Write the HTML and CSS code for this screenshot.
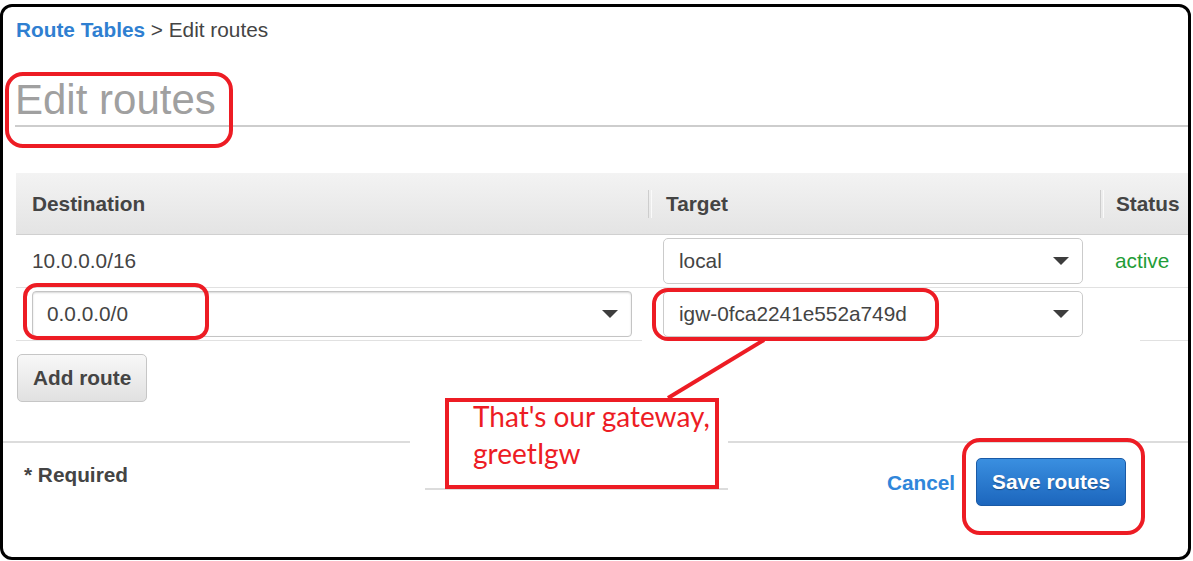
FILE: index.html
```html
<!DOCTYPE html>
<html>
<head>
<meta charset="utf-8">
<link rel="stylesheet" href="styles.css">
</head>
<body>
<div class="page">
  <div class="frame">
    <div class="main">
      <div class="crumbs"><a class="crumb-link">Route Tables</a> &gt; Edit routes</div>
      <h1 class="title">Edit routes</h1>
      <div class="table">
        <div class="th">Destination</div>
        <div class="th th-sep th-target">Target</div>
        <div class="th th-sep th-status">Status</div>

        <div class="td td-dest">10.0.0.0/16</div>
        <div class="td td-target"><div class="select"><span>local</span><i class="caret"></i></div></div>
        <div class="td td-status"><span class="active">active</span></div>

        <div class="td td-dest"><div class="input"><span>0.0.0.0/0</span><i class="caret"></i></div></div>
        <div class="td td-target"><div class="select"><span>igw-0fca2241e552a749d</span><i class="caret"></i></div></div>
        <div class="td td-status"></div>
      </div>
      <button class="btn-add">Add route</button>
    </div>
    <div class="footer">
      <div class="required">* Required</div>
      <div class="actions">
        <a class="cancel">Cancel</a>
        <button class="btn-save">Save routes</button>
      </div>
    </div>
  </div>

  <div class="cover"></div>
  <svg class="marks" width="1193" height="561" viewBox="0 0 1193 561">
    <rect x="642" y="340" width="498" height="1" fill="#fff"/>
    <line x1="425" y1="489" x2="728" y2="489" stroke="#dcdcdc" stroke-width="2"/>
    <g fill="none" stroke="#ed1c24" stroke-width="4">
      <rect x="7" y="74" width="224" height="72" rx="16" ry="16"/>
      <rect x="25" y="285" width="182" height="53" rx="12" ry="12"/>
      <rect x="654" y="290" width="283" height="49" rx="14" ry="14"/>
      <line x1="764" y1="340" x2="668" y2="398"/>
      <rect x="964" y="440" width="179" height="93" rx="16" ry="16"/>
    </g>
  </svg>
  <div class="callout">
    <p class="callout-text">That's our gateway,<br>greetIgw</p>
  </div>
</div>
</body>
</html>
```

FILE: styles.css
```css
* { box-sizing: border-box; }

body {
  margin: 0;
  background: #fff;
  font-family: "Liberation Sans", Arial, sans-serif;
  font-size: 20.8px;
  color: #444;
}

.page {
  position: relative;
  width: 1193px;
  height: 561px;
  overflow: hidden;
}

.frame {
  margin-top: 4px;
  width: 1191px;
  height: 556px;
  border: 3px solid #000;
  border-radius: 12px;
  overflow: hidden;
  background: #fff;
}

.main {
  padding: 11px 0 0 13px;
}

.crumbs {
  line-height: 24px;
  color: #444;
}

.crumb-link {
  color: #2f7fd1;
  font-weight: bold;
}

.title {
  margin: 34px 0 0 -1px;
  padding: 0 0 1px;
  font-size: 42px;
  line-height: 48px;
  font-weight: normal;
  color: #a0a0a0;
  text-indent: 0;
  border-bottom: 2px solid #cdcdcd;
}

.table {
  margin-top: 46px;
  display: grid;
  grid-template-columns: 632px 452px 1fr;
  grid-auto-rows: auto;
}

.th {
  position: relative;
  height: 62px;
  display: flex;
  align-items: center;
  padding-left: 16px;
  font-weight: bold;
  color: #444;
  background: linear-gradient(#f3f3f3, #e4e4e4);
  border-bottom: 1px solid #d0d0d0;
}

.th-target { padding-left: 18px; }
.th-status { padding-left: 16px; }

.th-sep::before {
  content: "";
  position: absolute;
  left: 0;
  top: 17px;
  width: 2px;
  height: 28px;
  border-left: 1px solid #cdcdcd;
  border-right: 1px solid #fafafa;
}

.td {
  height: 53px;
  display: flex;
  align-items: center;
  border-bottom: 1px solid #e1e1e1;
  color: #444;
}

.td-dest { padding: 0 16px; }
.td-target { padding: 0 17px 0 15px; }
.td-status { padding-left: 15px; }

.active { color: #1f9d38; }

.select,
.input {
  width: 100%;
  height: 46px;
  display: flex;
  align-items: center;
  justify-content: space-between;
  border: 1px solid #cbcbcb;
  border-radius: 5px;
  background: #fff;
  padding: 0 13px 0 15px;
  color: #444;
}

.input {
  padding-left: 14px;
  border-color: #c4c4c4;
  border-radius: 4px;
  box-shadow: inset 0 1px 2px rgba(0, 0, 0, 0.16);
}

.caret {
  width: 0;
  height: 0;
  border-left: 8px solid transparent;
  border-right: 8px solid transparent;
  border-top: 8px solid #3d3d3d;
}

.btn-add {
  margin: 13px 0 0 1px;
  height: 48px;
  padding: 0 15px;
  font-family: inherit;
  font-size: 20.8px;
  font-weight: bold;
  color: #444;
  background: linear-gradient(#f8f8f8, #e1e1e1);
  border: 1px solid #c6c6c6;
  border-radius: 5px;
}

.footer {
  margin-top: 39px;
  border-top: 2px solid #dcdcdc;
  padding: 15px 62px 0 21px;
  display: flex;
  justify-content: space-between;
  align-items: flex-start;
}

.required {
  margin-top: 5px;
  line-height: 24px;
  font-weight: bold;
  color: #444;
}

.actions {
  display: flex;
  align-items: center;
  gap: 21px;
}

.cancel {
  font-weight: bold;
  color: #2f86da;
  margin-top: 2px;
}

.btn-save {
  height: 48px;
  padding: 0 15px;
  font-family: inherit;
  font-size: 20.8px;
  font-weight: bold;
  color: #fff;
  text-shadow: 0 1px 1px rgba(0, 0, 0, 0.35);
  background: linear-gradient(#3a8fe0, #1c66bd);
  border: 1px solid #1a5aa6;
  border-radius: 5px;
}

.cover {
  position: absolute;
  left: 410px;
  top: 395px;
  width: 318px;
  height: 93px;
  background: #fff;
}

.marks {
  position: absolute;
  left: 0;
  top: 0;
}

.callout {
  position: absolute;
  left: 445px;
  top: 398px;
  width: 274px;
  height: 91px;
  border: 4px solid #ed1c24;
  background: #fff;
  padding-left: 24px;
}

.callout-text {
  margin: -4px 0 0;
  font-family: Lato, "Open Sans", sans-serif;
  font-size: 28px;
  line-height: 37px;
  color: #ed1c24;
  white-space: nowrap;
}
```
